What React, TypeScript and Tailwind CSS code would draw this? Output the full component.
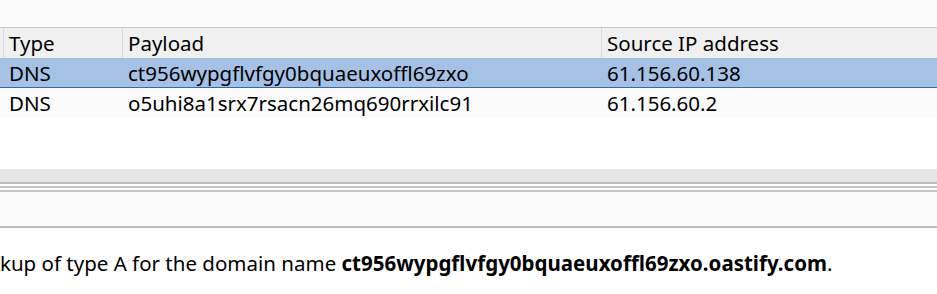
import React from "react";

type Interaction = {
  type: string;
  payload: string;
  sourceIp: string;
};

const interactions: Interaction[] = [
  { type: "DNS", payload: "ct956wypgflvfgy0bquaeuxoffl69zxo", sourceIp: "61.156.60.138" },
  { type: "DNS", payload: "o5uhi8a1srx7rsacn26mq690rrxilc91", sourceIp: "61.156.60.2" },
];

const cols = "grid grid-cols-[4px_119px_479px_1fr]";

const App: React.FC = () => {
  const selected = 0;

  return (
    <div className="w-[937px] h-[294px] overflow-hidden bg-white text-[20.5px] text-black font-['Noto_Sans','Open_Sans',sans-serif] leading-none">
      {/* Top strip */}
      <div className="h-[27px] bg-[#fbfbfb]" />

      {/* Interactions table */}
      <div className="border-t border-[#c9c9c9]">
        <div className={`${cols} h-[31px] bg-[#f0f0f0] border-b border-[#a9bcd2]`}>
          <div className="border-r border-[#dadada]" />
          <div className="flex items-center pl-[5px] border-r border-[#dadada]">Type</div>
          <div className="flex items-center pl-[5px] border-r border-[#dadada]">Payload</div>
          <div className="flex items-center pl-[5px]">Source IP address</div>
        </div>

        {interactions.map((row, i) => (
          <div
            key={row.payload}
            className={
              i === selected
                ? `${cols} h-[29px] bg-[#a5c1e6] border-b border-[#3a6aa3]`
                : `${cols} h-[30px] bg-[#fbfbfb]`
            }
          >
            <div />
            <div className="flex items-center pl-[5px]">{row.type}</div>
            <div className="flex items-center pl-[5px]">{row.payload}</div>
            <div className="flex items-center pl-[5px]">{row.sourceIp}</div>
          </div>
        ))}
      </div>

      {/* Empty table space */}
      <div className="h-[51px] bg-white" />

      {/* Splitter */}
      <div className="h-[13px] bg-[#e6e6e6]" />
      <div className="h-[2px] bg-[#bdbdbd]" />
      <div className="h-[2px] bg-white" />
      <div className="h-[2px] bg-[#c4c4c4]" />
      <div className="h-[2px] bg-white" />
      <div className="h-[2px] bg-[#c4c4c4]" />

      {/* Tab strip */}
      <div className="h-[36px] bg-[#fafafa] border-b-2 border-[#bdbdbd]" />

      {/* Description */}
      <div className="pt-[22px] whitespace-nowrap leading-[26px]">
        <span>kup of type A for the domain name </span>
        <span className="font-bold">ct956wypgflvfgy0bquaeuxoffl69zxo.oastify.com</span>
        <span>.</span>
      </div>
    </div>
  );
};

export default App;
